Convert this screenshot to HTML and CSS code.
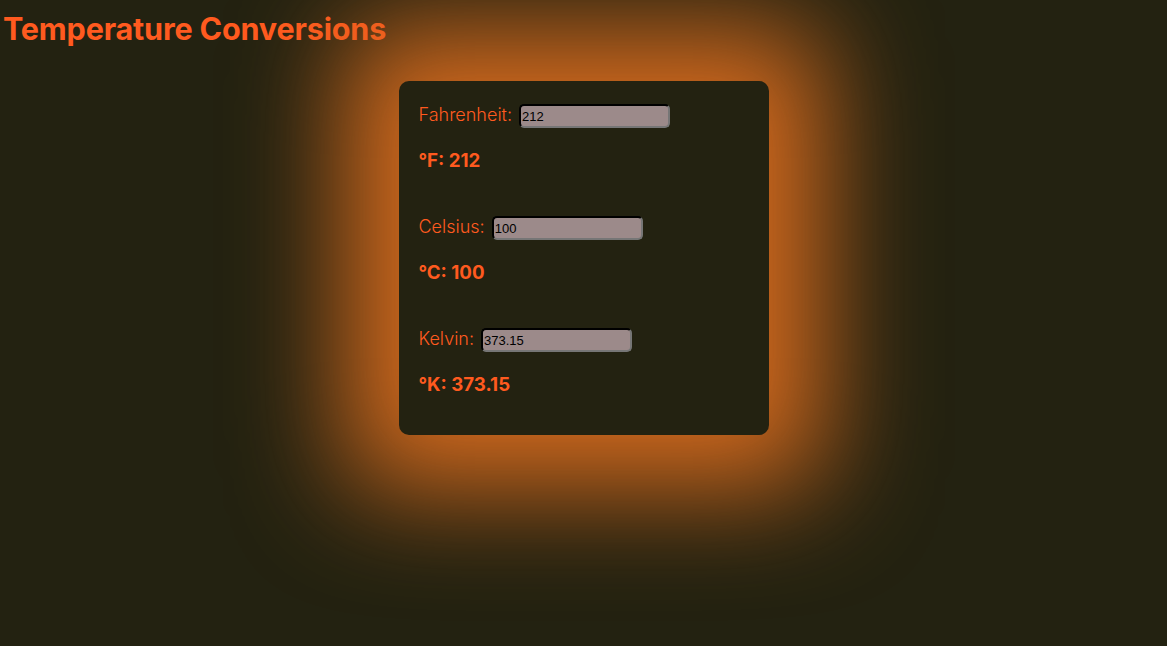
FILE: index.html
```html
<!DOCTYPE html>
<html lang="en">
<head>
<meta charset="utf-8">
<title>Temperature Conversions</title>
<link rel="stylesheet" href="styles.css">
</head>
<body>
<h1 class="title">Temperature Conversions</h1>
<main class="stage">
  <section class="card">
    <div class="unit">
      <label class="field"><span class="field-label">Fahrenheit:</span><input class="field-input" type="text" value="212"></label>
      <h3 class="result">°F: 212</h3>
    </div>
    <div class="unit">
      <label class="field"><span class="field-label">Celsius:</span><input class="field-input" type="text" value="100"></label>
      <h3 class="result">°C: 100</h3>
    </div>
    <div class="unit">
      <label class="field"><span class="field-label">Kelvin:</span><input class="field-input" type="text" value="373.15"></label>
      <h3 class="result">°K: 373.15</h3>
    </div>
  </section>
</main>
</body>
</html>
```

FILE: styles.css
```css
html, body {
  margin: 0;
  padding: 0;
  height: 100%;
  overflow: hidden;
}
body {
  background: #232211;
  font-family: Inter, "Noto Sans", sans-serif;
  color: #ff5a1f;
}
.title {
  margin: 0;
  padding: 11px 0 0 3px;
  font-size: 30.6px;
  font-weight: 700;
  line-height: 36px;
  letter-spacing: -0.2px;
  color: #ff5a1f;
}
.stage {
  display: flex;
  justify-content: center;
  padding-top: 34px;
}
.card {
  width: 370px;
  box-sizing: border-box;
  padding: 22px 20px 39px;
  background: #232211;
  border-radius: 10px;
  box-shadow: 0 0 110px 55px #d2691e;
  display: flex;
  flex-direction: column;
  gap: 43px;
}
.unit {
  display: flex;
  flex-direction: column;
  gap: 20px;
}
.field {
  display: flex;
  align-items: center;
  gap: 7px;
  height: 26px;
}
.field-label {
  padding-bottom: 3px;
  font-size: 18px;
  font-weight: 300;
  color: #ff5a1f;
}
.field-input {
  width: 151px;
  height: 24px;
  box-sizing: border-box;
  margin: 0;
  padding: 1px 1px;
  border: 2px inset #767676;
  border-top-color: #2a2a2a;
  border-left-color: #2a2a2a;
  border-radius: 5px;
  background: #9c8a8a;
  font-family: "Liberation Sans", Arial, sans-serif;
  font-size: 13px;
  color: #000;
}
.result {
  margin: 0;
  font-size: 18.72px;
  font-weight: 700;
  line-height: 23px;
  color: #ff5a1f;
}
```
